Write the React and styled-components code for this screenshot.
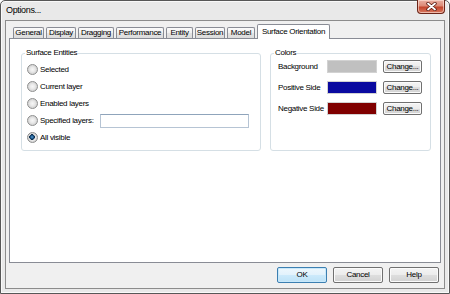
import { Fragment } from 'react';
import styled, { createGlobalStyle } from 'styled-components';

const GlobalStyle = createGlobalStyle`
  html, body { margin: 0; padding: 0; background: #fff; }
  body {
    font-family: "Liberation Sans", Arial, sans-serif;
    font-size: 8px;
    letter-spacing: -0.3px;
    color: #000;
  }
`;

const Window = styled('div')`
  width: 450px;
  height: 294px;
  box-sizing: border-box;
  display: flex;
  flex-direction: column;
  border: 1px solid #575757;
  border-radius: 5px 5px 0 0;
  background: #e9e9e9;
  box-shadow: inset 0 0 0 1px #f9f9f9;
`;

const TitleBar = styled('div')`
  height: 19px;
  display: flex;
  justify-content: space-between;
  align-items: flex-start;
  padding: 0 4px 0 5px;
`;

const Title = styled('span')`
  font-size: 9px;
  letter-spacing: -0.35px;
  line-height: 19px;
`;

const CloseButton = styled('div')`
  width: 28px;
  height: 14px;
  margin-top: -1px;
  box-sizing: border-box;
  display: flex;
  align-items: center;
  justify-content: center;
  border: 1px solid #6b2418;
  border-top: none;
  border-radius: 0 0 4px 4px;
  background: linear-gradient(#eab0a2, #dc8a76 45%, #c4452c 55%, #d7785f);
  box-shadow: inset 0 0 0 1px rgba(255, 230, 220, 0.6);
`;

const Client = styled('div')`
  flex: 1;
  margin: 0 4px 4px 4px;
  border: 1px solid #8c8c8c;
  background: #f0f0f0;
  display: flex;
  flex-direction: column;
  padding: 3px 3px 0 3px;
`;

const TabRow = styled('div')`
  height: 14px;
  display: flex;
  align-items: flex-end;
  padding-left: 4px;
`;

const Tab = styled('div')`
  width: ${(p) => p.$w}px;
  height: ${(p) => (p.$active ? 15 : 11)}px;
  box-sizing: border-box;
  margin-right: 2px;
  margin-bottom: ${(p) => (p.$active ? -1 : 0)}px;
  border: 1px solid #898c95;
  border-bottom: none;
  border-radius: 2px 2px 0 0;
  background: ${(p) =>
    p.$active ? '#fff' : 'linear-gradient(#fbfbfb, #f0f0f0 50%, #e4e4e4 50%, #dcdcdc)'};
  line-height: ${(p) => (p.$active ? 13 : 10)}px;
  text-align: center;
  white-space: nowrap;
  position: relative;
  z-index: ${(p) => (p.$active ? 1 : 0)};
`;

const Panel = styled('div')`
  height: 225px;
  box-sizing: border-box;
  border: 1px solid #898c95;
  background: #fff;
  display: flex;
  align-items: flex-start;
  gap: 9px;
  padding: 9px 9px 0 11px;
`;

const GroupBox = styled('fieldset')`
  margin: 0;
  padding: 0;
  min-width: 0;
  width: ${(p) => p.$w}px;
  height: 103px;
  box-sizing: border-box;
  border: 1px solid #d5dfe5;
  border-radius: 3px;
`;

const Caption = styled('legend')`
  padding: 0 1px;
  margin-left: 3px;
  line-height: 10px;
`;

const RadioList = styled('div')`
  display: flex;
  flex-direction: column;
  padding: 3px 0 0 5px;
`;

const RadioRow = styled('label')`
  height: 17px;
  display: flex;
  align-items: center;
`;

const Radio = styled('span')`
  width: 11px;
  height: 11px;
  box-sizing: border-box;
  margin-right: 2px;
  border-radius: 50%;
  border: 1px solid #8e8f8f;
  flex-shrink: 0;
  background: ${(p) =>
    p.$checked
      ? 'radial-gradient(circle at 45% 45%, #5aa0d8 0, #1b5384 1.6px, #0d2c4a 2.6px, transparent 3px), radial-gradient(circle, #f6f6f6 0, #e9e9e9 3px, #c9c9c9 5px)'
      : 'radial-gradient(circle, #f6f6f6 0, #ececec 2px, #cfcfcf 5px)'};
`;

const TextBox = styled('input')`
  width: 149px;
  height: 14px;
  box-sizing: border-box;
  margin: 0 11px 0 auto;
  padding: 0 2px;
  border: 1px solid #b6c4d4;
  border-top-color: #8fa4bb;
  font: inherit;
  outline: none;
`;

const ColorGrid = styled('div')`
  display: grid;
  grid-template-columns: 43px 50px 39px;
  grid-auto-rows: 13px;
  column-gap: 6px;
  row-gap: 8px;
  align-items: center;
  padding: 2px 0 0 7px;
`;

const ColorLabel = styled('span')`
  white-space: nowrap;
`;

const Swatch = styled('div')`
  height: 13px;
  box-sizing: border-box;
  border: 1px solid #d2d2d2;
  background: ${(p) => p.$color};
`;

const Button = styled('button')`
  width: ${(p) => p.$w}px;
  height: ${(p) => p.$h}px;
  box-sizing: border-box;
  margin: 0;
  padding: 0;
  border: 1px solid ${(p) => (p.$default ? '#3c7fb1' : '#707070')};
  border-radius: 2px;
  background: ${(p) =>
    p.$default
      ? 'linear-gradient(#eef7fd, #e2f2fc 50%, #cdeafb 50%, #bde2f7)'
      : 'linear-gradient(#f4f4f4, #ececec 50%, #dedede 50%, #d2d2d2)'};
  box-shadow: inset 0 0 0 1px ${(p) => (p.$default ? '#c8e8fa' : '#fbfbfb')};
  font: inherit;
  letter-spacing: inherit;
  color: #000;
  line-height: 1;
`;

const ButtonRow = styled('div')`
  display: flex;
  justify-content: flex-end;
  gap: 6px;
  margin-top: 4px;
  padding-right: 2px;
`;

const tabs = [
  ['General', 31],
  ['Display', 30],
  ['Dragging', 36],
  ['Performance', 48],
  ['Entity', 27],
  ['Session', 30],
  ['Model', 28],
  ['Surface Orientation', 73],
];

const options = ['Selected', 'Current layer', 'Enabled layers', 'Specified layers:', 'All visible'];

const colors = [
  ['Background', '#c0c0c0'],
  ['Positive Side', '#0a0aa0'],
  ['Negative Side', '#800000'],
];

function CloseGlyph() {
  return (
    <svg width="11" height="9" viewBox="0 0 11 9">
      <path d="M2 1.5 L9 7.5 M9 1.5 L2 7.5" stroke="#5a1a10" strokeWidth="3.4" strokeLinecap="round" />
      <path d="M2 1.5 L9 7.5 M9 1.5 L2 7.5" stroke="#fff" strokeWidth="1.8" strokeLinecap="round" />
    </svg>
  );
}

export default function App() {
  return (
    <>
      <GlobalStyle />
      <Window>
        <TitleBar>
          <Title>Options...</Title>
          <CloseButton>
            <CloseGlyph />
          </CloseButton>
        </TitleBar>
        <Client>
          <TabRow>
            {tabs.map(([name, w]) => (
              <Tab key={name} $w={w} $active={name === 'Surface Orientation'}>
                {name}
              </Tab>
            ))}
          </TabRow>
          <Panel>
            <GroupBox $w={240}>
              <Caption>Surface Entities</Caption>
              <RadioList>
                {options.map((o) => (
                  <RadioRow key={o}>
                    <Radio $checked={o === 'All visible'} />
                    <span>{o}</span>
                    {o === 'Specified layers:' && <TextBox />}
                  </RadioRow>
                ))}
              </RadioList>
            </GroupBox>
            <GroupBox $w={161}>
              <Caption>Colors</Caption>
              <ColorGrid>
                {colors.map(([label, c]) => (
                  <Fragment key={label}>
                    <ColorLabel>{label}</ColorLabel>
                    <Swatch $color={c} />
                    <Button $w={39} $h={13}>Change...</Button>
                  </Fragment>
                ))}
              </ColorGrid>
            </GroupBox>
          </Panel>
          <ButtonRow>
            <Button $w={50} $h={16} $default>OK</Button>
            <Button $w={50} $h={16}>Cancel</Button>
            <Button $w={50} $h={16}>Help</Button>
          </ButtonRow>
        </Client>
      </Window>
    </>
  );
}
